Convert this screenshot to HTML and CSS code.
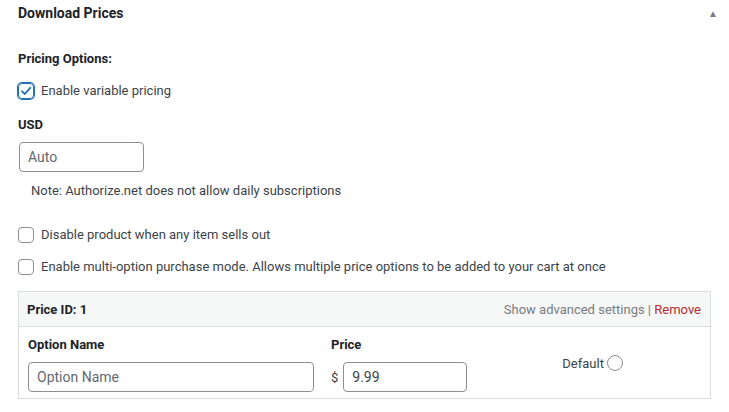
FILE: index.html
```html
<!DOCTYPE html>
<html>
<head>
<meta charset="utf-8">
<link rel="stylesheet" href="styles.css">
</head>
<body>
<div class="postbox">
  <div class="hndle">
    <h2 class="title">Download Prices</h2>
    <span class="toggle">&#9650;</span>
  </div>
  <div class="inside">
    <p class="label first">Pricing Options:</p>
    <label class="check">
      <span class="cb checked"><svg width="12" height="12" viewBox="0 0 12 12"><path d="M2 6.3 L4.9 9 L10.2 2.8" fill="none" stroke="#2271b1" stroke-width="1.8" stroke-linecap="round" stroke-linejoin="round"/></svg></span>
      Enable variable pricing
    </label>
    <p class="label usd">USD</p>
    <input class="field auto" type="text" placeholder="Auto">
    <p class="note">Note: Authorize.net does not allow daily subscriptions</p>
    <label class="check disable"><span class="cb"></span>Disable product when any item sells out</label>
    <label class="check multi"><span class="cb"></span>Enable multi-option purchase mode. Allows multiple price options to be added to your cart at once</label>

    <div class="price-box">
      <div class="pb-head">
        <span class="pb-id">Price ID: 1</span>
        <span class="pb-actions">Show advanced settings | <a class="remove">Remove</a></span>
      </div>
      <div class="pb-body">
        <div class="col name-col">
          <span class="col-label">Option Name</span>
          <input class="field name" type="text" placeholder="Option Name">
        </div>
        <div class="col price-col">
          <span class="col-label">Price</span>
          <div class="price-row"><span class="cur">$</span><input class="field price" type="text" value="9.99"></div>
        </div>
        <div class="col default-col">
          <span class="default">Default <span class="radio"></span></span>
        </div>
      </div>
    </div>
  </div>
</div>
</body>
</html>
```

FILE: styles.css
```css
* { box-sizing: border-box; }
body {
  margin: 0;
  background: #fff;
  font-family: Roboto, "Noto Sans", sans-serif;
  font-size: 13px;
  color: #3c434a;
}
.postbox { width: 729px; }
.hndle {
  display: flex;
  justify-content: space-between;
  align-items: center;
  height: 26px;
  padding: 0 11px 0 18px;
}
.title {
  margin: 0;
  font-size: 14px;
  font-weight: 700;
  color: #1d2327;
}
.toggle {
  font-size: 10px;
  color: #787c82;
}
.inside {
  padding: 0 18px;
}
.label {
  margin: 0;
  font-weight: 700;
  color: #1d2327;
  line-height: 18px;
}
.label.first { margin-top: 24px; }
.check {
  display: flex;
  align-items: center;
  gap: 7px;
  line-height: 18px;
}
.check:first-of-type { margin-top: 14px; }
.cb {
  width: 16px;
  height: 16px;
  border: 1px solid #8c8f94;
  border-radius: 4px;
  display: inline-flex;
  align-items: center;
  justify-content: center;
  flex: none;
}
.cb.checked {
  border-color: #2271b1;
  box-shadow: 0 0 0 1px #2271b1;
}
.label.usd { margin-top: 16px; }
.field {
  font-family: Roboto, "Noto Sans", sans-serif;
  font-size: 14px;
  color: #3c434a;
  height: 30px;
  border: 1px solid #8c8f94;
  border-radius: 4px;
  padding: 0 8px;
  outline: none;
  background: #fff;
}
.field::placeholder { color: #646970; }
.auto {
  display: block;
  width: 125px;
  margin: 8px 0 0 1px;
}
.note {
  margin: 10px 0 0 13px;
  line-height: 18px;
}
.check.disable { margin-top: 26px; }
.check.multi { margin-top: 14px; }
.price-box {
  margin-top: 15px;
  border: 1px solid #dcdcde;
  width: 693px;
}
.pb-head {
  display: flex;
  justify-content: space-between;
  align-items: center;
  height: 35px;
  padding: 0 9px 0 8px;
  background: #f6f7f7;
  border-bottom: 1px solid #dcdcde;
}
.pb-id { font-weight: 700; color: #1d2327; }
.pb-actions { color: #787c82; }
.remove { color: #b32d2e; }
.pb-body {
  display: flex;
  padding: 9px 9px 6px 9px;
}
.col { display: flex; flex-direction: column; gap: 8px; }
.col-label { font-weight: 700; color: #1d2327; line-height: 18px; }
.name-col { width: 286px; }
.name { width: 286px; }
.price-col { margin-left: 17px; }
.price-row { display: flex; align-items: center; gap: 5px; }
.cur { color: #3c434a; }
.price { width: 124px; }
.default-col { margin-left: 95px; padding-top: 20px; }
.default { display: flex; align-items: center; gap: 3px; }
.radio {
  width: 16px; height: 16px;
  border: 1px solid #8c8f94;
  border-radius: 50%;
  display: inline-block;
  margin-top: -2px;
}
```
